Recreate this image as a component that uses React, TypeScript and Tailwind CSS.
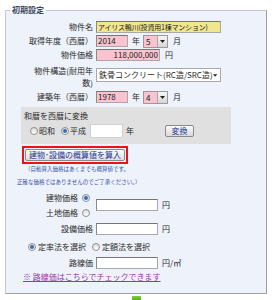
import React from 'react';

function Radio({ checked = false }: { checked?: boolean }) {
  return (
    <span className="flex h-[8px] w-[8px] shrink-0 items-center justify-center rounded-full border border-[#8e8e8e] bg-gradient-to-b from-[#dcdcdc] to-white">
      {checked && <span className="h-[4px] w-[4px] rounded-full bg-[#2f6dbd]" />}
    </span>
  );
}

function SmallSelect({ value }: { value: string }) {
  return (
    <div className="flex h-[13px] w-[25px] border border-[#9a9a9a]">
      <div className="flex-1 bg-[#fac3cf] pl-[2px] text-[8px] leading-[11px] text-[#222]">{value}</div>
      <div className="flex w-[10px] items-center justify-center border-l border-[#a8a8a8] bg-gradient-to-b from-[#f6f6f6] to-[#d6d6d6]">
        <svg width="5" height="3" viewBox="0 0 5 3">
          <path d="M0 0h5L2.5 3z" fill="#222" />
        </svg>
      </div>
    </div>
  );
}

function Field({ w, bg = 'bg-white', value = '', extra = '' }: { w: string; bg?: string; value?: string; extra?: string }) {
  return (
    <input
      readOnly
      value={value}
      className={`h-[12px] ${w} ${bg} border border-[#a8a8a8] border-t-[#767676] border-l-[#8a8a8a] px-[1px] leading-none text-[#222] outline-none ${extra || 'text-[8px]'}`}
    />
  );
}

function Label({ children }: { children: React.ReactNode }) {
  return <div className="w-[87px] shrink-0 text-right">{children}</div>;
}

export default function App() {
  return (
    <div className="h-[300px] w-[276px] overflow-hidden bg-white font-['Noto_Sans_CJK_JP','Liberation_Sans',sans-serif] text-[8px] leading-[12px] text-[#2a2a2a]">
      <fieldset className="ml-[5px] mt-[4px] h-[290px] w-[262px] border border-[#c3c8d1] border-b-[#a2a2a2] border-r-[#9e9e9e] bg-[#eef2fa] p-0">
        <legend className="ml-[4px] px-[2px] text-[8px] font-bold leading-[12px] text-[#3b4660]">初期設定</legend>

        <div className="mt-[4px] flex h-[14px] items-center">
          <Label>物件名</Label>
          <div className="ml-[3px]">
            <Field w="w-[125px]" bg="bg-[#efe68d]" value="アイリス鴨川(投資用1棟マンション)" extra="text-[7px] tracking-[-0.2px]" />
          </div>
        </div>

        <div className="flex h-[14px] items-center">
          <Label>取得年度（西暦）</Label>
          <div className="ml-[3px]">
            <Field w="w-[32px]" bg="bg-[#fac3cf]" value="2014" />
          </div>
          <span className="ml-[4px]">年</span>
          <div className="ml-[3px]">
            <SmallSelect value="5" />
          </div>
          <span className="ml-[5px]">月</span>
        </div>

        <div className="flex h-[14px] items-center">
          <Label>物件価格</Label>
          <div className="ml-[3px]">
            <Field w="w-[64px]" bg="bg-[#fac3cf]" value="118,000,000" extra="text-[8px] text-right" />
          </div>
          <span className="ml-[5px]">円</span>
        </div>

        <div className="mt-[3px] flex items-start">
          <Label>
            物件構造(耐用年
            <br />
            数)
          </Label>
          <div className="ml-[3px] mt-[3px] flex h-[14px] w-[125px] items-center border border-[#a8a8a8] bg-white pl-[2px] pr-[3px]">
            <span className="flex-1 whitespace-nowrap">鉄骨コンクリート(RC造/SRC造)</span>
            <svg width="5" height="3" viewBox="0 0 5 3">
              <path d="M0 0h5L2.5 3z" fill="#222" />
            </svg>
          </div>
        </div>

        <div className="mt-[1px] flex h-[14px] items-center">
          <Label>建築年（西暦）</Label>
          <div className="ml-[3px]">
            <Field w="w-[32px]" bg="bg-[#fac3cf]" value="1978" />
          </div>
          <span className="ml-[4px]">年</span>
          <div className="ml-[3px]">
            <SmallSelect value="4" />
          </div>
          <span className="ml-[5px]">月</span>
        </div>

        <div className="ml-[15px] mt-[3px] h-[37px] w-[210px] bg-[#e0e0e0] px-[3px] pt-[3px]">
          <div>和暦を西暦に変換</div>
          <div className="mt-[1px] flex h-[15px] items-center">
            <span className="ml-[6px]">
              <Radio />
            </span>
            <span className="ml-[1px]">昭和</span>
            <span className="ml-[6px]">
              <Radio checked />
            </span>
            <span className="ml-[1px]">平成</span>
            <div className="ml-[4px]">
              <input readOnly value="" className="h-[14px] w-[33px] border border-[#d0d0d0] bg-white outline-none" />
            </div>
            <span className="ml-[3px]">年</span>
            <button className="ml-[31px] h-[12px] w-[29px] rounded-[2px] border border-[#8a8a8a] bg-gradient-to-b from-[#fafafa] to-[#dadada] text-[8px] leading-[10px] text-[#26389a]">
              変換
            </button>
          </div>
        </div>

        <div className="ml-[16px] mt-[2px] h-[18px] w-[106px] border-2 border-[#e8141c] p-[1px]">
          <button className="h-[12px] w-full rounded-[2px] border border-[#8a8a8a] bg-gradient-to-b from-[#fbfbfb] to-[#dedede] text-[8px] leading-[10px] text-[#26389a]">
            建物･設備の概算値を算入
          </button>
        </div>

        <div className="ml-[19px] h-[10px] whitespace-nowrap text-[5.5px] leading-[10px] text-[#3550a5]">
          （自動算入価格はあくまでも概算値です。
        </div>
        <div className="ml-[11px] mt-[3px] h-[10px] whitespace-nowrap text-[5.5px] leading-[10px] text-[#3550a5]">
          正確な価格ではありませんのでご了承ください。）
        </div>

        <div className="mt-[3px] flex items-center">
          <div className="w-[86px] shrink-0 pr-[2px]">
            <div className="flex h-[15px] items-center justify-end">
              <span>建物価格</span>
              <span className="ml-[4px]">
                <Radio checked />
              </span>
            </div>
            <div className="flex h-[15px] items-center justify-end">
              <span>土地価格</span>
              <span className="ml-[4px]">
                <Radio />
              </span>
            </div>
          </div>
          <div className="ml-[4px]">
            <Field w="w-[62px]" />
          </div>
          <span className="ml-[4px]">円</span>
        </div>

        <div className="mt-[2px] flex h-[14px] items-center">
          <Label>設備価格</Label>
          <div className="ml-[3px]">
            <Field w="w-[62px]" />
          </div>
          <span className="ml-[4px]">円</span>
        </div>

        <div className="mt-[4px] flex h-[14px] items-center">
          <span className="ml-[22px]">
            <Radio checked />
          </span>
          <span className="ml-[2px]">定率法を選択</span>
          <span className="ml-[6px]">
            <Radio />
          </span>
          <span className="ml-[2px]">定額法を選択</span>
        </div>

        <div className="mt-[2px] flex h-[14px] items-center">
          <Label>路線価</Label>
          <div className="ml-[3px]">
            <Field w="w-[62px]" />
          </div>
          <span className="ml-[4px]">円/㎡</span>
        </div>

        <div className="ml-[17px] mt-[2px] h-[10px] leading-[10px]">
          <a className="text-[#9a35a8] underline">※ 路線価はこちらでチェックできます</a>
        </div>
      </fieldset>
      <div className="ml-[132px] mt-[2px] h-[6px] w-[9px] rounded-t-[1px] bg-gradient-to-b from-[#7bd23a] to-[#3f9e1c]" />
    </div>
  );
}
